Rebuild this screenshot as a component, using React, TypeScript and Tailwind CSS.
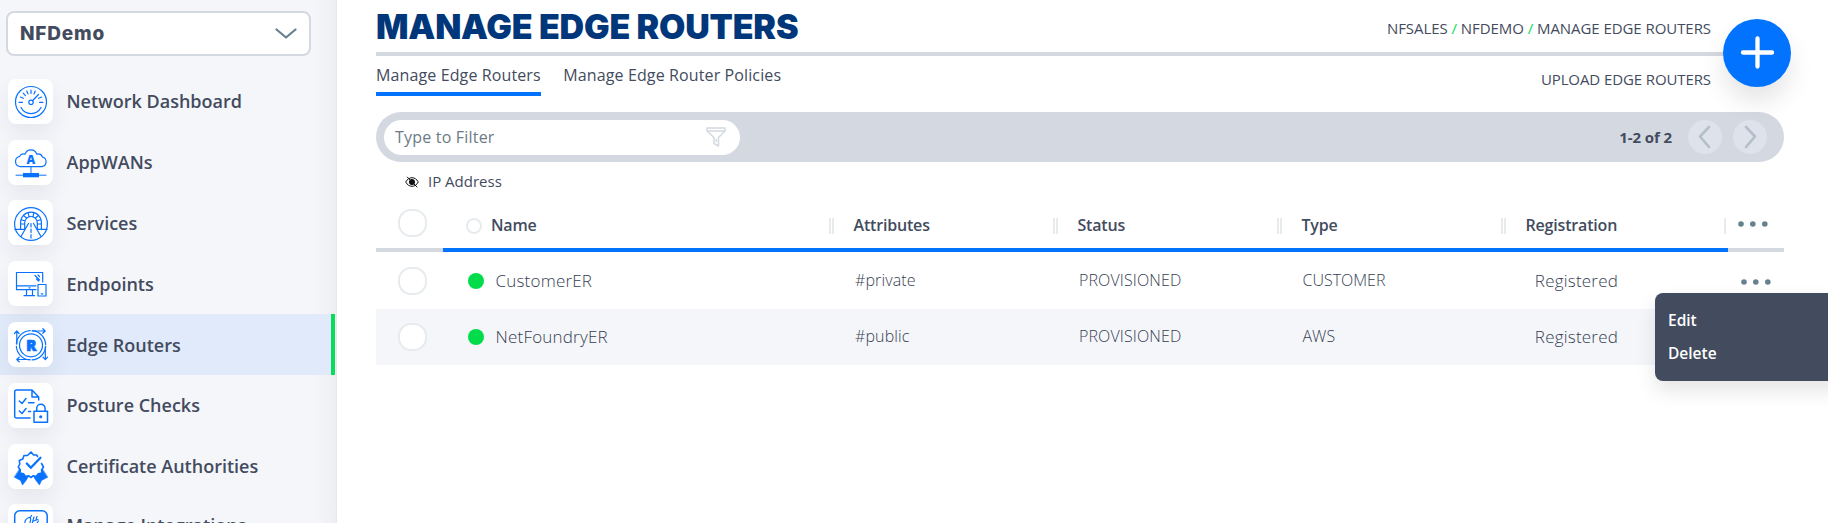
import type { ReactNode } from "react";
import clsx from "clsx";

type NavItem = {
    label: string;
    icon: ReactNode;
    active?: boolean;
};

type Router = {
    name: string;
    attributes: string;
    status: string;
    type: string;
    registration: string;
};

const navItems: NavItem[] = [
    {
        label: "Network Dashboard",
        icon: (
            <>
                <circle cx="23" cy="23" r="15.5" />
                <circle cx="23" cy="23.3" r="2.2" />
                <path d="M24.7 21.5 30.5 15.5M13 28.5a11.3 11.3 0 0 0 20 0M11 23.3h3.5M31.5 23.3H35M12.3 18l3 1.3M33.7 18l-3 1.3M15.2 14.2l2.2 2.4M18.8 12l1.2 3M23 11v3.5M27.2 12 26 15" />
            </>
        ),
    },
    {
        label: "AppWANs",
        icon: (
            <>
                <path d="M12 26.7a5.2 5.2 0 0 1-.5-10.2 4.6 4.6 0 0 1 5.5-2.3 6.2 6.2 0 0 1 11.8 0 4.8 4.8 0 0 1 5.7 2.8 5 5 0 0 1-.5 9.7Z" />
                <path d="M23 26.7V33M8 35.2h30" strokeWidth="1" />
                <rect x="15" y="33" width="16" height="4.3" fill="currentColor" stroke="none" />
                <text x="22.9" y="24" textAnchor="middle" fontSize="12" fontWeight="800" fill="currentColor" stroke="none">A</text>
            </>
        ),
    },
    {
        label: "Services",
        icon: (
            <>
                <circle cx="23" cy="24" r="16.4" />
                <path d="M6.8 29.3H16M30 29.3h9.2M12.6 29V22.5a10.4 10.4 0 0 1 20.8 0V29M16.7 29V22.8a6.3 6.3 0 0 1 12.6 0V29M12.6 24h4M12.9 19.5l4.2 1.5M15.5 15.2l3.2 3M20 12.6l1 3.8M26 12.6l-1 3.8M30.5 15.2l-3.2 3M33.1 19.5l-4.2 1.5M33.4 24h-4M20.5 23.5 13 36.5M25.5 23.5 33 36.5" />
                <path d="M23 23.5V39" strokeDasharray="3.5 2" />
            </>
        ),
    },
    {
        label: "Endpoints",
        icon: (
            <path d="M34.7 21V11.5H8.5V28.7H28M8.5 24.8H28M18.5 29v5.5M24.5 29v5.5M16 34.7h10.5M30 23.5h8V35h-8ZM27 14.5l4.5 4.5M30 14l1.5 1.5M28.5 18l2 2M21 26.8h1M33.3 32.8h1.5" />
        ),
    },
    {
        label: "Edge Routers",
        active: true,
        icon: (
            <>
                <circle cx="23" cy="23.3" r="14.7" strokeDasharray="20.6 2.49" strokeDashoffset="-1.2" />
                <circle cx="23" cy="23.3" r="11.5" />
                <path d="M8.8 22V9.3M6.5 11.5 8.8 9l2.3 2.5M24 9h13M34.8 6.7 37.2 9l-2.4 2.3M37.3 25v12.5M35 35.2l2.3 2.5 2.3-2.5M22 37.5H9M11.2 35.2 8.8 37.5l2.4 2.3" />
                <text x="23.2" y="28.7" textAnchor="middle" fontSize="15.5" fontWeight="800" fill="currentColor" stroke="currentColor" strokeWidth=".7">R</text>
            </>
        ),
    },
    {
        label: "Posture Checks",
        icon: (
            <g strokeWidth="1.5">
                <path d="M22 35H8.5a1.8 1.8 0 0 1-1.8-1.8V8.8A1.8 1.8 0 0 1 8.5 7H24l6.7 7v3M24 7.3V14h6.5M11.3 18l2.7 2.5 4-5M11.3 28l2.7 2.5 4-5M20.5 19.8h5.5M20.5 28.5h2" />
                <path d="M26 28.2h13.5v11H26ZM28.7 28v-2.5a4.2 4.2 0 0 1 8.4 0V28" />
                <circle cx="32.7" cy="33.7" r=".8" fill="currentColor" />
            </g>
        ),
    },
    {
        label: "Certificate Authorities",
        icon: (
            <>
                <path d="M11.5 25.5 20.5 32.5 18 36.5 14.5 41 12.5 36.5 6.5 33.3ZM34.5 25.5 25.5 32.5 28 36.5 31.5 41 33.5 36.5 39.5 33.3Z" fill="currentColor" strokeWidth=".6" />
                <path d="M33.5 19.5l2 3.5-2 3 .3 3-3.5.8-2 2.7-3-.8L23 33.5l-2.5-1.8-3 .8-2-2.7-3.5-.8.3-3-2-3 1.5-3-.5-3.5 3.5-1.5 1.2-3.5h3.5L23 8l2.6 3h3l1 1.5" fill="white" strokeWidth="1.6" />
                <path d="m18.8 19.5 4 4.3L32.5 13.8" strokeWidth="2.3" />
            </>
        ),
    },
    {
        label: "Manage Integrations",
        icon: (
            <>
                <rect x="6.7" y="6.7" width="32.5" height="30" rx="5" strokeWidth="1.5" />
                <path d="M17 20a6 6 0 0 1 4-6.5c2-.5 2 2 1 5M22 14l1.5-2.5M24 20l2-7M25.5 17l4.5-1.5M28 15.5l1-3M29 19l1.5-2" />
            </>
        ),
    },
];

const columns = ["Attributes", "Status", "Type"];

const routers: Router[] = [
    { name: "CustomerER", attributes: "#private", status: "PROVISIONED", type: "CUSTOMER", registration: "Registered" },
    { name: "NetFoundryER", attributes: "#public", status: "PROVISIONED", type: "AWS", registration: "Registered" },
];

const gridCols = "grid grid-cols-[67px_389px_224px_224px_224px_224px_56px]";

function Sidebar() {
    return (
        <aside className="w-[337px] h-full shrink-0 overflow-hidden border-r border-[#e6e9ee] bg-[#f5f6fa] bg-linear-to-l from-[#eceef2] to-[#f5f6fa] to-[20px] pt-[11px]">
            <button className="ml-1.5 w-[305px] h-[45px] flex items-center justify-between rounded-lg border-2 border-[#d4d8e1] bg-white pl-3 pr-3">
                <span className="pt-0.5 font-['Inter'] text-[19px] font-extrabold tracking-[0.8px]">NFDemo</span>
                <svg width="22" height="12" viewBox="0 0 22 12" fill="none" stroke="#66808f" strokeWidth="2.2" strokeLinecap="round" strokeLinejoin="round">
                    <path d="m1.5 1.5 9.5 8 9.5-8" />
                </svg>
            </button>
            <nav className="mt-[15px]">
                {navItems.map((item) => (
                    <a
                        key={item.label}
                        className={clsx(
                            "group h-[60.8px] mr-px flex items-center pl-2",
                            item.active && "bg-[#e1eafa] border-r-4 border-[#08dc5a]"
                        )}
                    >
                        <span className="size-[45px] shrink-0 rounded-lg bg-white shadow-[0_10px_20px_rgba(40,40,80,0.07)]">
                            <svg width="45" height="45" viewBox="0 0 45 45" fill="none" stroke="currentColor" strokeWidth="1.2" strokeLinecap="round" strokeLinejoin="round" className="text-[#0872ff]">
                                {item.icon}
                            </svg>
                        </span>
                        <span className="ml-[13.5px] text-[18px] leading-7 font-semibold group-last:pb-1">{item.label}</span>
                    </a>
                ))}
            </nav>
        </aside>
    );
}

function Dots() {
    return (
        <svg width="30" height="6" viewBox="0 0 30 6" fill="#66808f">
            <circle cx="3" cy="3" r="2.8" />
            <circle cx="14.8" cy="3" r="2.8" />
            <circle cx="26.8" cy="3" r="2.8" />
        </svg>
    );
}

function PageButton({ d }: { d: string }) {
    return (
        <button className="size-[34px] flex items-center justify-center rounded-full bg-[#dee2eb]">
            <svg width="14" height="24" viewBox="0 0 14 24" fill="none" stroke="#b3bfca" strokeWidth="2.6" strokeLinecap="round" strokeLinejoin="round">
                <path d={d} />
            </svg>
        </button>
    );
}

function Checkbox() {
    return <span className="ml-[22px] w-[29px] h-7 rounded-[13px] border-2 border-[#e6ebee] bg-white" />;
}

function Header() {
    return (
        <header className="relative">
            <div className="h-14 flex justify-between border-b-4 border-[#d4d8e1]">
                <h1 className="pt-px font-['Inter'] text-[34px] leading-[52px] font-black tracking-[-0.2px] text-[#00377b] whitespace-nowrap">MANAGE EDGE ROUTERS</h1>
                <p className="mr-[73px] pt-[17px] text-[15px] leading-[22px] font-medium tracking-[-0.06px] whitespace-nowrap">
                    NFSALES <span className="text-[#08dc5a]">/</span> NFDEMO <span className="text-[#08dc5a]">/</span> MANAGE EDGE ROUTERS
                </p>
            </div>
            <div className="h-14 flex items-start text-base font-medium tracking-[0.12px]">
                <a className="h-10 border-b-4 border-[#0273ff] pt-[7px] leading-6">Manage Edge Routers</a>
                <a className="ml-[22.5px] pt-[7px] leading-6">Manage Edge Router Policies</a>
                <a className="ml-auto mr-[73px] pt-3 text-[15px] leading-[22px] tracking-[-0.1px]">UPLOAD EDGE ROUTERS</a>
            </div>
            <button className="absolute -right-[7px] top-[19px] size-[68px] flex items-center justify-center rounded-full bg-[#0273ff] shadow-[0_15px_25px_rgba(0,0,0,0.1)]">
                <svg width="34" height="34" viewBox="0 0 34 34" stroke="white" strokeWidth="4.3" strokeLinecap="round">
                    <path d="M17.5 2.5v28M3 16.5h29" />
                </svg>
            </button>
        </header>
    );
}

function FilterBar() {
    return (
        <div className="h-[50px] flex items-center rounded-full bg-[#d4d8e1] pl-2 pr-[17px]">
            <div className="w-[356px] h-[35px] flex items-center justify-between rounded-full bg-white pl-[11px] pr-3.5 text-base font-medium tracking-[0.2px] text-[#6c7a86]">
                Type to Filter
                <svg width="20" height="20" viewBox="0 0 20 20" fill="none" stroke="#d4d8e1" strokeWidth="1.5" strokeLinejoin="round">
                    <path d="M1 1h18v3l-6.5 6.5V19L8 16.5v-6L1 4ZM1 4h18M10.3 12v3" />
                </svg>
            </div>
            <span className="ml-auto mr-4 text-[15px] font-bold tracking-[-0.1px]">1-2 of 2</span>
            <div className="flex gap-[11px] pb-px">
                <PageButton d="M11 2 2 11.5 11 22" />
                <PageButton d="M3 2 12 11.5 3 22" />
            </div>
        </div>
    );
}

function Bar({ className }: { className?: string }) {
    return <span className={clsx("w-0.5 h-4 bg-[#e6ebee] mt-[3px]", className)} />;
}

function RouterTable() {
    return (
        <div>
            <div className={clsx(gridCols, "h-[51px] text-base font-semibold tracking-[-0.18px]")}>
                <div className="border-b-4 border-[#d4d8e1] pt-2 flex"><Checkbox /></div>
                <div className="flex items-center border-b-4 border-[#0273ff] pr-px">
                    <span className="ml-[23px] mt-0.5 size-4 rounded-full border-2 border-[#e6ebee]" />
                    <span className="ml-[9px]">Name</span>
                    <Bar className="ml-auto" />
                </div>
                {columns.map((column) => (
                    <div key={column} className="flex items-center border-b-4 border-[#0273ff] pr-px">
                        <Bar />
                        <span className="ml-[19.5px]">{column}</span>
                        <Bar className="ml-auto" />
                    </div>
                ))}
                <div className="flex items-center border-b-4 border-[#0273ff] pr-0.5">
                    <Bar />
                    <span className="ml-[19.5px]">Registration</span>
                    <Bar className="ml-auto" />
                </div>
                <div className="flex items-center border-b-4 border-[#d4d8e1] pl-2.5 pb-px"><Dots /></div>
            </div>
            {routers.map((router, index) => (
                <div
                    key={router.name}
                    className={clsx(gridCols, "items-center text-base font-light text-[#363e52]", index % 2 ? "h-14 bg-[#f5f6fa]" : "h-[57px]")}
                >
                    <div className="flex"><Checkbox /></div>
                    <div className="flex items-center text-[17px] tracking-[0.2px]">
                        <span className="ml-[25px] size-4 rounded-full bg-[#02dc4a]" />
                        <span className="ml-[11.5px]">{router.name}</span>
                    </div>
                    <span className="pl-[23px] pb-0.5 tracking-[0.12px]">{router.attributes}</span>
                    <span className="pl-[23px] pb-0.5 tracking-[0.12px]">{router.status}</span>
                    <span className="pl-[22.5px] pb-0.5">{router.type}</span>
                    <span className="pr-[110px] text-right text-[17px] tracking-[0.2px]">{router.registration}</span>
                    <div className="pl-[13px] pt-0.5">{index === 0 && <Dots />}</div>
                </div>
            ))}
        </div>
    );
}

export default function App() {
    return (
        <div className="relative flex h-[523px] w-full overflow-hidden bg-white font-['Open_Sans','Noto_Sans',sans-serif] text-[#434b5e]">
            <Sidebar />
            <main className="ml-[39px] w-[1408px] shrink-0">
                <Header />
                <FilterBar />
                <div className="h-[39px] flex items-center pl-[29px] text-[15px] font-medium">
                    <svg width="14" height="12" viewBox="0 0 14 12" fill="none" stroke="#111" strokeWidth="1">
                        <path d="M.7 6C2.2 3.2 4.5 1.7 7 1.7S11.8 3.2 13.3 6C11.8 8.8 9.5 10.3 7 10.3S2.2 8.8.7 6ZM2 .8l10.3 10.5" />
                        <circle cx="7" cy="6" r="2.6" fill="#111" />
                    </svg>
                    <span className="ml-[9px]">IP Address</span>
                </div>
                <RouterTable />
            </main>
            <div className="absolute left-[1655px] top-[293px] w-[190px] h-[88px] flex flex-col rounded-lg bg-[#434b5e] pl-[13px] pt-[11px] text-[15.5px] leading-[33px] font-semibold text-white shadow-[0_10px_20px_rgba(0,0,0,0.1)]">
                <a>Edit</a>
                <a>Delete</a>
            </div>
        </div>
    );
}
